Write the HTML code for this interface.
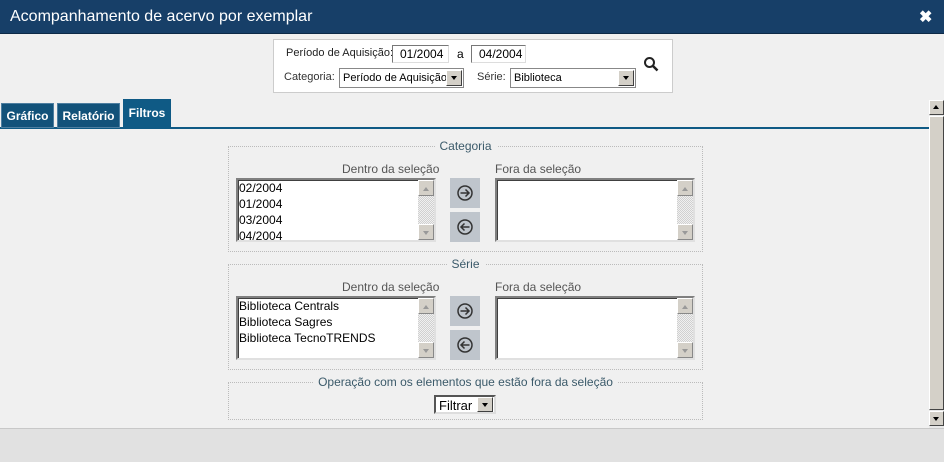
<!DOCTYPE html><html><head><meta charset="utf-8"><style>
*{box-sizing:border-box;margin:0;padding:0}
body{width:944px;height:462px;background:#f0f0f0;font-family:"Liberation Sans",sans-serif;position:relative;overflow:hidden;font-size:11px}
.a{position:absolute;white-space:nowrap}
.title{left:0;top:0;width:944px;height:34px;background:#173f68;border-bottom:1px solid #0d2a47;color:#fff;font-size:16px;line-height:34px;padding-left:10px}
.inp{background:#fff;border:1px solid #777;border-right-color:#ddd;border-bottom-color:#ddd;height:18px;line-height:16px;padding-left:7px;font-size:12px}
.sel{background:#fff;border:1px solid #888;height:20px;line-height:18px;padding-left:3px;font-size:11px;overflow:hidden}
.dd{position:absolute;right:1px;top:1px;width:16px;height:16px;background:#d4d0c8;border:1px solid;border-color:#fff #404040 #404040 #fff}
.dd:after{content:"";position:absolute;left:4px;top:5px;border:3.5px solid transparent;border-top:4px solid #000}
.tab{background:#12527a;color:#fff;font-size:12px;font-weight:bold;border:1px solid #4d7ea0;text-align:center}
.fs{border:1px dotted #bbb}
.leg{background:#f0f0f0;color:#3b5a6a;font-size:12px;padding:0 5px;top:-8px;left:50%;transform:translateX(-50%);white-space:nowrap}
.lb{background:#fff;border:2px solid;border-color:#808080 #e0e0e0 #e0e0e0 #808080;box-shadow:inset 1px 1px #404040}
.lb div{font-size:12px;line-height:16px;padding-left:1px;color:#000}
.sb{position:absolute;right:0;top:0;width:16px;height:100%;background:repeating-conic-gradient(#d0d0d0 0 25%,#f0f0f0 0 50%) 0 0/2px 2px}
.sbb{position:absolute;left:0;width:16px;height:16px;background:#d4d0c8;border:1px solid;border-color:#fff #888 #888 #fff}
.up:after,.dn:after{content:"";position:absolute;left:4px;border:3.5px solid transparent}
.up:after{top:3px;border-bottom:4px solid #999}
.dn:after{top:6px;border-top:4px solid #999}
.lbl{color:#555;font-size:12px}
.btn{background:#bfc5cc;width:30px;height:30px}
</style></head><body>
<div class="a title">Acompanhamento de acervo por exemplar</div>
<div class="a" style="left:919px;top:7px;color:#fff;font-size:16px;font-weight:bold">✖</div>

<div class="a" style="left:273px;top:39px;width:400px;height:54px;background:#fff;border:1px solid #ccc"></div>
<div class="a" style="left:286px;top:47px;font-size:11px;color:#222">Período de Aquisição:</div>
<div class="a inp" style="left:392px;top:45px;width:57px">01/2004</div>
<div class="a" style="left:457px;top:47px;font-size:12px">a</div>
<div class="a inp" style="left:471px;top:45px;width:55px">04/2004</div>
<div class="a" style="left:284px;top:71px;color:#333;font-size:11px">Categoria:</div>
<div class="a sel" style="left:339px;top:68px;width:125px">Período de Aquisição<span class="dd"></span></div>
<div class="a" style="left:477px;top:71px;color:#333;font-size:11px">Série:</div>
<div class="a sel" style="left:510px;top:68px;width:126px">Biblioteca<span class="dd"></span></div>
<svg class="a" style="left:643px;top:56px" width="16" height="16"><circle cx="6.5" cy="6.5" r="4.5" fill="none" stroke="#222" stroke-width="2"/><path d="M10 10l4.5 4.5" stroke="#222" stroke-width="2.5"/></svg>

<div class="a" style="left:0;top:127px;width:929px;height:2px;background:#0f5a85"></div>
<div class="a tab" style="left:1px;top:103px;width:53px;height:25px;line-height:24px">Gráfico</div>
<div class="a tab" style="left:57px;top:103px;width:63px;height:25px;line-height:24px">Relatório</div>
<div class="a tab" style="left:123px;top:99px;width:48px;height:29px;line-height:26px;background:#0f5a85;border-color:#0f5a85">Filtros</div>

<div class="a" style="left:929px;top:100px;width:15px;height:328px;background:#e8e8e8"></div>
<div class="a" style="left:929px;top:100px;width:15px;height:15px;background:#d4d0c8;border:1px solid;border-color:#fff #444 #444 #fff"></div>
<div class="a" style="left:933px;top:105px;border:3.5px solid transparent;border-bottom:4px solid #000;border-top:0"></div>
<div class="a" style="left:929px;top:116px;width:15px;height:294px;background:#d4d0c8;border:1px solid;border-color:#fff #444 #444 #fff"></div>
<div class="a" style="left:929px;top:411px;width:15px;height:15px;background:#d4d0c8;border:1px solid;border-color:#fff #444 #444 #fff"></div>
<div class="a" style="left:933px;top:417px;border:3.5px solid transparent;border-top:4px solid #000;border-bottom:0"></div>

<div class="a fs" style="left:228px;top:146px;width:475px;height:106px"><span class="a leg">Categoria</span></div>
<div class="a lbl" style="left:342px;top:162px">Dentro da seleção</div>
<div class="a lbl" style="left:495px;top:162px">Fora da seleção</div>
<div class="a lb" style="left:236px;top:178px;width:200px;height:64px"><div>02/2004</div><div>01/2004</div><div>03/2004</div><div>04/2004</div><span class="sb"><span class="sbb up" style="top:0"></span><span class="sbb dn" style="bottom:0"></span></span></div>
<div class="a lb" style="left:495px;top:178px;width:200px;height:64px"><span class="sb"><span class="sbb up" style="top:0"></span><span class="sbb dn" style="bottom:0"></span></span></div>
<div class="a btn" style="left:450px;top:178px"><svg width="30" height="30"><circle cx="15" cy="15" r="7" fill="none" stroke="#333" stroke-width="1.5"/><path d="M10.5 15h8M15.5 11.5l3.5 3.5-3.5 3.5" fill="none" stroke="#333" stroke-width="1.5"/></svg></div>
<div class="a btn" style="left:450px;top:212px"><svg width="30" height="30"><circle cx="15" cy="15" r="7" fill="none" stroke="#333" stroke-width="1.5"/><path d="M19.5 15h-8M14.5 11.5l-3.5 3.5 3.5 3.5" fill="none" stroke="#333" stroke-width="1.5"/></svg></div>

<div class="a fs" style="left:228px;top:264px;width:475px;height:106px"><span class="a leg">Série</span></div>
<div class="a lbl" style="left:342px;top:280px">Dentro da seleção</div>
<div class="a lbl" style="left:495px;top:280px">Fora da seleção</div>
<div class="a lb" style="left:236px;top:296px;width:200px;height:64px"><div>Biblioteca Centrals</div><div>Biblioteca Sagres</div><div>Biblioteca TecnoTRENDS</div><span class="sb"><span class="sbb up" style="top:0"></span><span class="sbb dn" style="bottom:0"></span></span></div>
<div class="a lb" style="left:495px;top:296px;width:200px;height:64px"><span class="sb"><span class="sbb up" style="top:0"></span><span class="sbb dn" style="bottom:0"></span></span></div>
<div class="a btn" style="left:450px;top:296px"><svg width="30" height="30"><circle cx="15" cy="15" r="7" fill="none" stroke="#333" stroke-width="1.5"/><path d="M10.5 15h8M15.5 11.5l3.5 3.5-3.5 3.5" fill="none" stroke="#333" stroke-width="1.5"/></svg></div>
<div class="a btn" style="left:450px;top:330px"><svg width="30" height="30"><circle cx="15" cy="15" r="7" fill="none" stroke="#333" stroke-width="1.5"/><path d="M19.5 15h-8M14.5 11.5l-3.5 3.5 3.5 3.5" fill="none" stroke="#333" stroke-width="1.5"/></svg></div>

<div class="a fs" style="left:228px;top:382px;width:475px;height:38px"><span class="a leg">Operação com os elementos que estão fora da seleção</span></div>
<div class="a sel" style="left:434px;top:395px;width:62px;height:19px;line-height:17px;font-size:13px;border:2px solid;border-color:#555 #ddd #ddd #555">Filtrar<span class="dd" style="top:0;height:15px"></span></div>

<div class="a" style="left:0;top:428px;width:944px;height:34px;background:#e1e1e1;border-top:1px solid #c8c8c8"></div>
</body></html>
